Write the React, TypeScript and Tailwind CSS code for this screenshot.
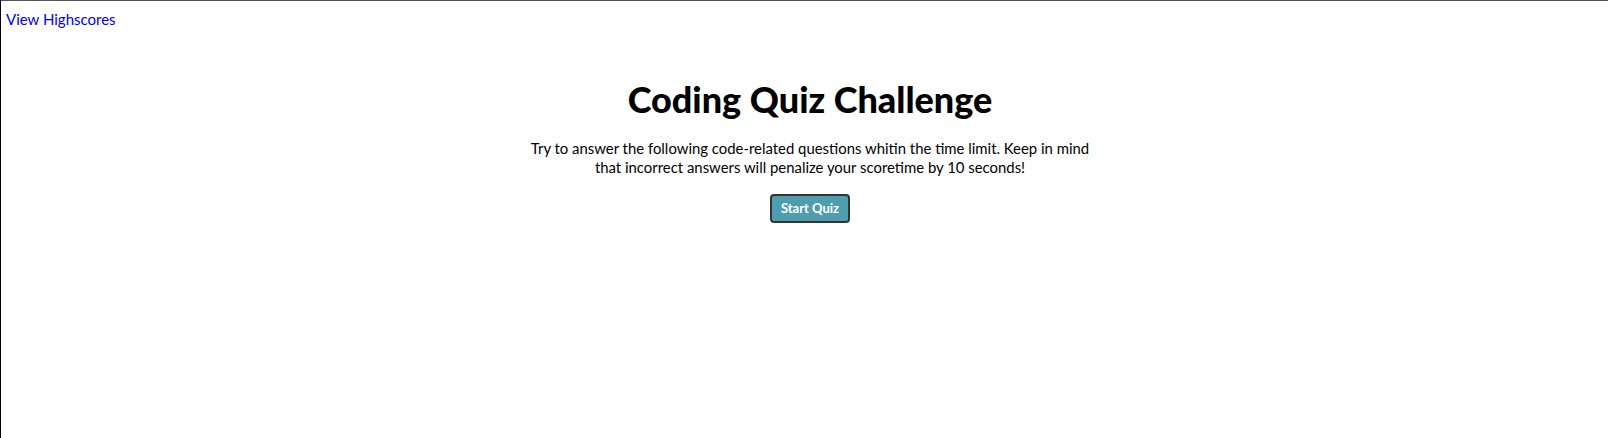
export default function App() {
  return (
    <div className="min-h-[438px] border-t border-l border-t-[#555] border-l-black bg-white font-['Lato',sans-serif] text-black">
      <header className="px-[5px] pt-[6px]">
        <a href="#" className="text-[15px] leading-[20px] text-[#0000ff]">
          View Highscores
        </a>
      </header>
      <main className="mt-[48px] flex flex-col items-center pl-[11px] text-center">
        <h1 className="text-[36px] font-black leading-[40px]">Coding Quiz Challenge</h1>
        <p className="mt-[20px] w-[570px] text-[14.9px] leading-[18.5px]">
          Try to answer the following code-related questions whitin the time limit. Keep in mind that incorrect answers will penalize your scoretime by 10 seconds!
        </p>
        <button className="mt-[18px] h-[29px] rounded-[4px] border-2 border-[#333] bg-[#4f9eaf] px-[9px] text-[13px] font-bold text-white">
          Start Quiz
        </button>
      </main>
    </div>
  )
}
